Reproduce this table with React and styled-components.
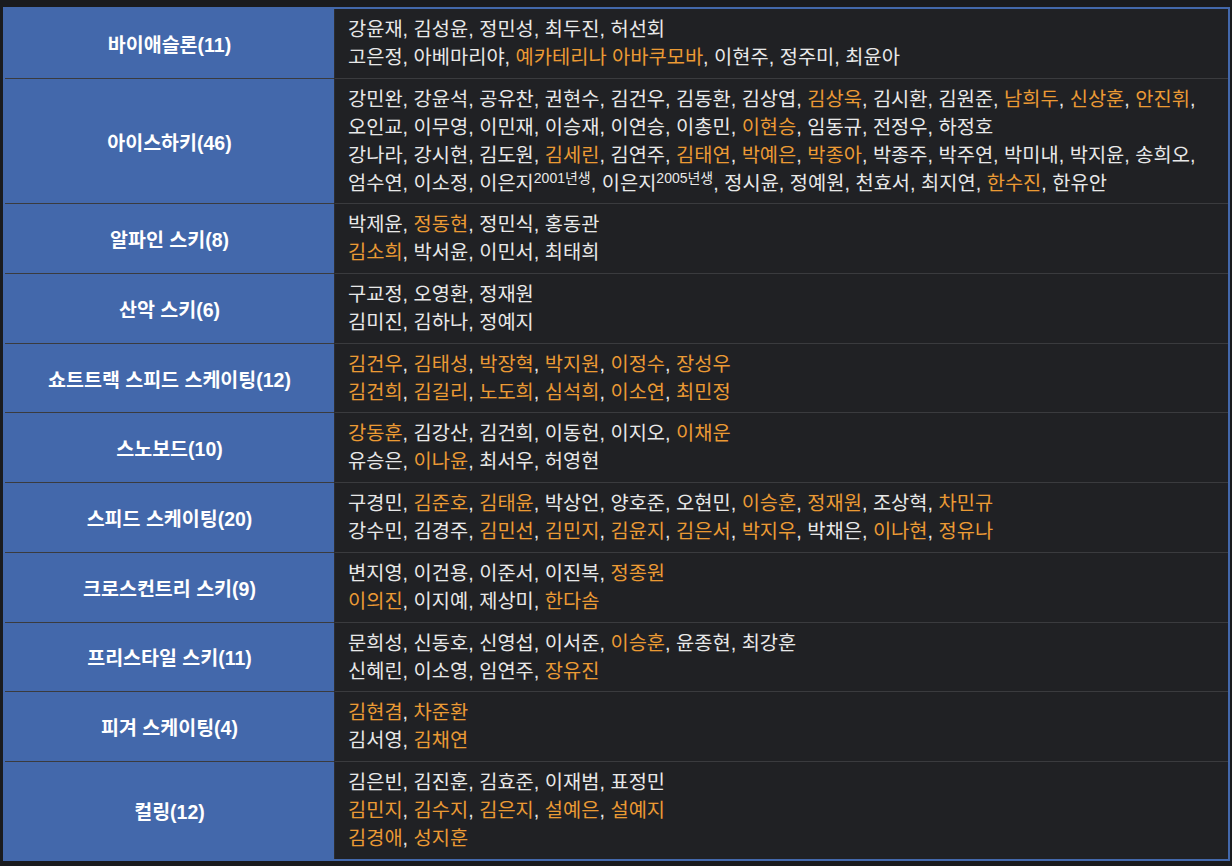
import styled, { createGlobalStyle } from "styled-components";

const GlobalStyle = createGlobalStyle`
  html, body {
    margin: 0;
    background: #1a1b1e;
  }
`;

const Page = styled.div`
  padding: 7px 2px 4px 3px;
`;

const Table = styled.table`
  width: 100%;
  border-collapse: collapse;
  border: 2px solid #4368ab;
  font-family: "Liberation Sans", "Noto Sans CJK KR", sans-serif;
`;

const Row = styled.tr`
  & + & > * {
    border-top: 1px solid #3a3b3e;
  }
`;

const Head = styled.th`
  width: 329px;
  background: #4368ab;
  color: #ffffff;
  font-size: 19.5px;
  font-weight: 700;
  text-align: center;
  vertical-align: middle;
  padding: 0;
  border-right: 1px solid #2c2d30;
`;

const Cell = styled.td`
  background: #202124;
  color: #e8e8e8;
  font-size: 19.8px;
  line-height: 28px;
  padding: 6px 13px 6.7px;
`;

const Line = styled.div`
  white-space: nowrap;
`;

const Name = styled.span`
  color: ${({ $hi }) => ($hi ? "#eb9a34" : "inherit")};
`;

const Sup = styled.sup`
  font-size: 14px;
  line-height: 0;
  vertical-align: 7px;
`;

// "*" marks a highlighted name, "^" adds a superscript note
const sports = [
  ["바이애슬론(11)", [
    "강윤재, 김성윤, 정민성, 최두진, 허선회",
    "고은정, 아베마리야, *예카테리나 아바쿠모바, 이현주, 정주미, 최윤아",
  ]],
  ["아이스하키(46)", [
    "강민완, 강윤석, 공유찬, 권현수, 김건우, 김동환, 김상엽, *김상욱, 김시환, 김원준, *남희두, *신상훈, *안진휘,",
    "오인교, 이무영, 이민재, 이승재, 이연승, 이총민, *이현승, 임동규, 전정우, 하정호",
    "강나라, 강시현, 김도원, *김세린, 김연주, *김태연, *박예은, *박종아, 박종주, 박주연, 박미내, 박지윤, 송희오,",
    "엄수연, 이소정, 이은지^2001년생, 이은지^2005년생, 정시윤, 정예원, 천효서, 최지연, *한수진, 한유안",
  ]],
  ["알파인 스키(8)", [
    "박제윤, *정동현, 정민식, 홍동관",
    "*김소희, 박서윤, 이민서, 최태희",
  ]],
  ["산악 스키(6)", [
    "구교정, 오영환, 정재원",
    "김미진, 김하나, 정예지",
  ]],
  ["쇼트트랙 스피드 스케이팅(12)", [
    "*김건우, *김태성, *박장혁, *박지원, *이정수, *장성우",
    "*김건희, *김길리, *노도희, *심석희, *이소연, *최민정",
  ]],
  ["스노보드(10)", [
    "*강동훈, 김강산, 김건희, 이동헌, 이지오, *이채운",
    "유승은, *이나윤, 최서우, 허영현",
  ]],
  ["스피드 스케이팅(20)", [
    "구경민, *김준호, *김태윤, 박상언, 양호준, 오현민, *이승훈, *정재원, 조상혁, *차민규",
    "강수민, 김경주, *김민선, *김민지, *김윤지, *김은서, *박지우, 박채은, *이나현, *정유나",
  ]],
  ["크로스컨트리 스키(9)", [
    "변지영, 이건용, 이준서, 이진복, *정종원",
    "*이의진, 이지예, 제상미, *한다솜",
  ]],
  ["프리스타일 스키(11)", [
    "문희성, 신동호, 신영섭, 이서준, *이승훈, 윤종현, 최강훈",
    "신혜린, 이소영, 임연주, *장유진",
  ]],
  ["피겨 스케이팅(4)", [
    "*김현겸, *차준환",
    "김서영, *김채연",
  ]],
  ["컬링(12)", [
    "김은빈, 김진훈, 김효준, 이재범, 표정민",
    "*김민지, *김수지, *김은지, *설예은, *설예지",
    "*김경애, *성지훈",
  ]],
];

const RosterLine = ({ text }) => {
  const trailing = text.endsWith(",");
  const names = (trailing ? text.slice(0, -1) : text).split(", ");
  return (
    <Line>
      {names.map((raw, i) => {
        const hi = raw.startsWith("*");
        const [name, note] = raw.replace("*", "").split("^");
        return (
          <span key={i}>
            <Name $hi={hi}>{name}</Name>
            {note && <Sup>{note}</Sup>}
            {(i < names.length - 1 || trailing) && ", "}
          </span>
        );
      })}
    </Line>
  );
};

const App = () => (
  <Page>
    <GlobalStyle />
    <Table>
      <tbody>
        {sports.map(([sport, lines]) => (
          <Row key={sport}>
            <Head>{sport}</Head>
            <Cell>
              {lines.map((l, i) => <RosterLine key={i} text={l} />)}
            </Cell>
          </Row>
        ))}
      </tbody>
    </Table>
  </Page>
);

export default App;
